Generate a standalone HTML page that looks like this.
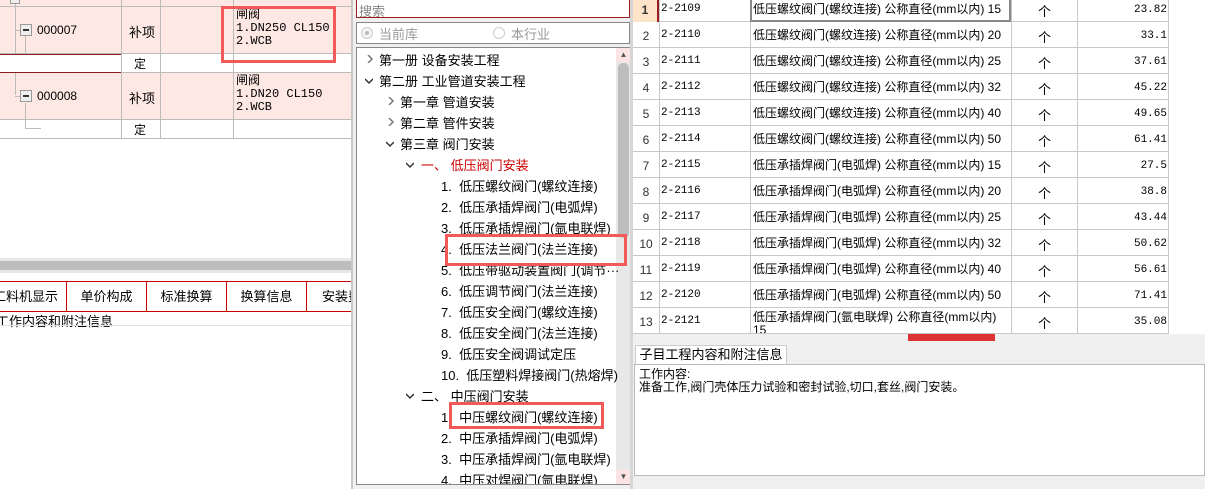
<!DOCTYPE html>
<html><head><meta charset="utf-8"><style>
*{margin:0;padding:0;box-sizing:border-box}
body{width:1205px;height:489px;overflow:hidden;background:#f0f0f0;font-family:"Liberation Sans","Noto Sans CJK SC","WenQuanYi Zen Hei",sans-serif;font-size:12px;color:#000;position:relative}
.a{position:absolute}
.mono{font-family:"Liberation Mono","WenQuanYi Zen Hei",monospace;font-size:12px;line-height:13px}
.hl{border:3px solid #f25a5a;position:absolute}
.cv{position:absolute;width:8px;height:8px}
</style></head><body>
<!-- LEFT PANEL -->
<div class="a" style="left:0;top:0;width:352px;height:489px;background:#fff"></div>
<div class="a" style="left:0;top:-2px;width:351px;height:9px;background:#fde8e4;border-bottom:1px solid #bbb"></div>
<div class="a" style="left:0;top:7px;width:351px;height:47px;background:#fde8e4;border-bottom:1px solid #bbb"></div>
<div class="a" style="left:0;top:54px;width:351px;height:19px;background:#fff;border-bottom:1px solid #bbb"></div>
<div class="a" style="left:0;top:73px;width:351px;height:47px;background:#fde8e4;border-bottom:1px solid #bbb"></div>
<div class="a" style="left:0;top:120px;width:351px;height:19px;background:#fff;border-bottom:1px solid #bbb"></div>
<div class="a" style="left:0;top:54px;width:122px;height:19px;border:1px solid #8b1a1a;border-left:none"></div>
<div class="a" style="left:121px;top:0;width:1px;height:139px;background:#bbb"></div>
<div class="a" style="left:160px;top:0;width:1px;height:139px;background:#bbb"></div>
<div class="a" style="left:233px;top:0;width:1px;height:139px;background:#bbb"></div>
<div class="a" style="left:351px;top:0;width:1px;height:139px;background:#bbb"></div>
<div class="a" style="left:15px;top:0;width:1px;height:54px;background:#bbb"></div>
<div class="a" style="left:15px;top:73px;width:1px;height:22px;background:#bbb"></div>
<div class="a" style="left:15px;top:30px;width:5px;height:1px;background:#bbb"></div>
<div class="a" style="left:15px;top:96px;width:5px;height:1px;background:#bbb"></div>
<div class="a" style="left:25px;top:36px;width:1px;height:18px;background:#bbb"></div>
<div class="a" style="left:25px;top:103px;width:1px;height:25px;background:#bbb"></div>
<div class="a" style="left:25px;top:128px;width:16px;height:1px;background:#bbb"></div>
<div class="a" style="left:10px;top:-4px;width:10px;height:8px;border:1px solid #999;background:#eee"></div>
<div class="a" style="left:20px;top:24px;width:12px;height:12px;border:1px solid #999;background:#eee"><div style="margin:4px 2px;height:2px;background:#333"></div></div>
<div class="a" style="left:20px;top:90px;width:12px;height:12px;border:1px solid #999;background:#eee"><div style="margin:4px 2px;height:2px;background:#333"></div></div>
<div class="a" style="left:37px;top:23px">000007</div>
<div class="a" style="left:37px;top:89px">000008</div>
<div class="a" style="left:129px;top:22px;font-size:13px">补项</div>
<div class="a" style="left:129px;top:88px;font-size:13px">补项</div>
<div class="a" style="left:134px;top:55px;font-size:12px">定</div>
<div class="a" style="left:134px;top:121px;font-size:12px">定</div>
<div class="a mono" style="left:236px;top:9px">闸阀<br>1.DN250 CL150<br>2.WCB</div>
<div class="a mono" style="left:236px;top:75px">闸阀<br>1.DN20 CL150<br>2.WCB</div>
<div class="hl" style="left:221px;top:6px;width:115px;height:57px"></div>
<div class="a" style="left:0;top:258px;width:352px;height:6px;background:#e6e6e6"></div>
<div class="a" style="left:0;top:261px;width:352px;height:9px;background:#bdbdbd"></div>
<div class="a" style="left:0;top:270px;width:352px;height:3px;background:#e6e6e6"></div>
<div class="a" style="left:0;top:281px;width:352px;height:31px;border-top:1px solid #c00;border-bottom:1px solid #c00;font-size:13px">
<div class="a" style="left:0;top:0;width:67px;height:29px;border-right:1px solid #c00;line-height:29px;overflow:hidden;white-space:nowrap"><span style="position:absolute;left:-7px">工料机显示</span></div>
<div class="a" style="left:67px;top:0;width:80px;height:29px;border-right:1px solid #c00;line-height:29px;text-align:center">单价构成</div>
<div class="a" style="left:147px;top:0;width:80px;height:29px;border-right:1px solid #c00;line-height:29px;text-align:center">标准换算</div>
<div class="a" style="left:227px;top:0;width:80px;height:29px;border-right:1px solid #c00;line-height:29px;text-align:center">换算信息</div>
<div class="a" style="left:307px;top:0;width:45px;height:29px;line-height:29px;padding-left:15px;overflow:hidden;white-space:nowrap">安装费</div>
</div>
<div class="a" style="left:-4px;top:311px;font-size:13px">工作内容和附注信息</div>
<div class="a" style="left:0;top:325px;width:352px;height:1px;background:#e0e0e0"></div>
<div class="a" style="left:351px;top:0;width:2px;height:489px;background:#c8c8c8"></div>
<!-- MIDDLE PANEL -->
<div class="a" style="left:353px;top:0;width:280px;height:489px;background:#f0f0f0"></div>
<div class="a" style="left:356px;top:-2px;width:274px;height:20px;background:#fff;border:1px solid #9b1c1c;color:#888;font-size:13px;padding:2px 2px">搜索</div>
<div class="a" style="left:356px;top:22px;width:274px;height:22px;background:#fff;border:1px solid #888;color:#999;font-size:13px">
<div class="a" style="left:4px;top:4px;width:12px;height:12px;border-radius:50%;border:1px solid #ccc;background:#f4f4f4"><div style="margin:3px;width:4px;height:4px;border-radius:50%;background:#bbb"></div></div>
<div class="a" style="left:22px;top:1px">当前库</div>
<div class="a" style="left:136px;top:4px;width:12px;height:12px;border-radius:50%;border:1px solid #ccc"></div>
<div class="a" style="left:154px;top:1px">本行业</div></div>
<div class="a" style="left:356px;top:47px;width:275px;height:438px;background:#fff;border:1px solid #888;overflow:hidden;font-size:13px">
<div class="a" style="left:259px;top:0;width:15px;height:436px;background:#e8e8e8"></div>
<div class="a" style="left:259px;top:0;width:15px;height:14px;background:#fde4e4;color:#555;font-size:8px;text-align:center;line-height:14px">▲</div>
<div class="a" style="left:259px;top:422px;width:15px;height:14px;background:#fde4e4;color:#555;font-size:8px;text-align:center;line-height:14px">▼</div>
<div class="a" style="left:261px;top:15px;width:11px;height:175px;background:#bdbdbd;border-radius:5px"></div>
<svg class="cv" style="left:9px;top:7px" viewBox="0 0 8 8"><path d="M2 0L6 4L2 8" fill="none" stroke="#777" stroke-width="1.5"/></svg><div class="a" style="left:22px;top:2px">第一册 设备安装工程</div>
<svg class="cv" style="left:8px;top:29px" viewBox="0 0 8 8"><path d="M0 2L4 6L8 2" fill="none" stroke="#333" stroke-width="1.5"/></svg><div class="a" style="left:22px;top:23px">第二册 工业管道安装工程</div>
<svg class="cv" style="left:30px;top:49px" viewBox="0 0 8 8"><path d="M2 0L6 4L2 8" fill="none" stroke="#777" stroke-width="1.5"/></svg><div class="a" style="left:43px;top:44px">第一章 管道安装</div>
<svg class="cv" style="left:30px;top:70px" viewBox="0 0 8 8"><path d="M2 0L6 4L2 8" fill="none" stroke="#777" stroke-width="1.5"/></svg><div class="a" style="left:43px;top:65px">第二章 管件安装</div>
<svg class="cv" style="left:29px;top:92px" viewBox="0 0 8 8"><path d="M0 2L4 6L8 2" fill="none" stroke="#333" stroke-width="1.5"/></svg><div class="a" style="left:43px;top:86px">第三章 阀门安装</div>
<svg class="cv" style="left:49px;top:113px" viewBox="0 0 8 8"><path d="M0 2L4 6L8 2" fill="none" stroke="#333" stroke-width="1.5"/></svg><div class="a" style="left:64px;top:107px;color:#c00">一、 低压阀门安装</div>
<div class="a" style="left:84px;top:128px">1.&nbsp; 低压螺纹阀门(螺纹连接)</div>
<div class="a" style="left:84px;top:149px">2.&nbsp; 低压承插焊阀门(电弧焊)</div>
<div class="a" style="left:84px;top:170px">3.&nbsp; 低压承插焊阀门(氩电联焊)</div>
<div class="a" style="left:84px;top:191px">4.&nbsp; 低压法兰阀门(法兰连接)</div>
<div class="a" style="left:84px;top:212px;white-space:nowrap">5.&nbsp; 低压带驱动装置阀门(调节···</div>
<div class="a" style="left:84px;top:233px">6.&nbsp; 低压调节阀门(法兰连接)</div>
<div class="a" style="left:84px;top:254px">7.&nbsp; 低压安全阀门(螺纹连接)</div>
<div class="a" style="left:84px;top:275px">8.&nbsp; 低压安全阀门(法兰连接)</div>
<div class="a" style="left:84px;top:296px">9.&nbsp; 低压安全阀调试定压</div>
<div class="a" style="left:84px;top:317px">10.&nbsp; 低压塑料焊接阀门(热熔焊)</div>
<svg class="cv" style="left:49px;top:344px" viewBox="0 0 8 8"><path d="M0 2L4 6L8 2" fill="none" stroke="#333" stroke-width="1.5"/></svg><div class="a" style="left:64px;top:338px">二、 中压阀门安装</div>
<div class="a" style="left:84px;top:359px">1.&nbsp; 中压螺纹阀门(螺纹连接)</div>
<div class="a" style="left:84px;top:380px">2.&nbsp; 中压承插焊阀门(电弧焊)</div>
<div class="a" style="left:84px;top:401px">3.&nbsp; 中压承插焊阀门(氩电联焊)</div>
<div class="a" style="left:84px;top:422px">4.&nbsp; 中压对焊阀门(氩电联焊)</div>
</div>
<div class="hl" style="left:445px;top:234px;width:182px;height:32px"></div>
<div class="hl" style="left:449px;top:402px;width:155px;height:27px"></div>
<div class="a" style="left:630px;top:0;width:3px;height:489px;background:#d6d6d6"></div>
<!-- RIGHT PANEL -->
<div class="a" style="left:633px;top:0;width:572px;height:334px;background:#fff"></div>
<div id="rt"></div>
<div class="a" style="left:633px;top:334px;width:572px;height:155px;background:#f0f0f0"></div>
<div class="a" style="left:908px;top:334px;width:87px;height:7px;background:#d33"></div>
<div class="a" style="left:635px;top:345px;width:152px;height:19px;background:#fff;border:1px solid #ccc;border-bottom:none;font-size:13px;text-align:center;line-height:18px">子目工程内容和附注信息</div>
<div class="a" style="left:634px;top:364px;width:571px;height:112px;background:#fff;border:1px solid #bbb;font-size:12px;padding:3px 4px;line-height:13px">工作内容:<br>准备工作,阀门壳体压力试验和密封试验,切口,套丝,阀门安装。</div>
<script>
var d=[["2-2109","低压螺纹阀门(螺纹连接) 公称直径(mm以内) 15","23.82"],["2-2110","低压螺纹阀门(螺纹连接) 公称直径(mm以内) 20","33.1"],["2-2111","低压螺纹阀门(螺纹连接) 公称直径(mm以内) 25","37.61"],["2-2112","低压螺纹阀门(螺纹连接) 公称直径(mm以内) 32","45.22"],["2-2113","低压螺纹阀门(螺纹连接) 公称直径(mm以内) 40","49.65"],["2-2114","低压螺纹阀门(螺纹连接) 公称直径(mm以内) 50","61.41"],["2-2115","低压承插焊阀门(电弧焊) 公称直径(mm以内) 15","27.5"],["2-2116","低压承插焊阀门(电弧焊) 公称直径(mm以内) 20","38.8"],["2-2117","低压承插焊阀门(电弧焊) 公称直径(mm以内) 25","43.44"],["2-2118","低压承插焊阀门(电弧焊) 公称直径(mm以内) 32","50.62"],["2-2119","低压承插焊阀门(电弧焊) 公称直径(mm以内) 40","56.61"],["2-2120","低压承插焊阀门(电弧焊) 公称直径(mm以内) 50","71.41"],["2-2121","低压承插焊阀门(氩电联焊) 公称直径(mm以内)<br>15","35.08"]];
var h="";
for(var i=0;i<13;i++){var t=-4+i*26;var c=d[i];
h+='<div class="a" style="left:633px;top:'+t+'px;width:536px;height:26px;border-bottom:1px solid #c8c8c8"></div>';
h+='<div class="a" style="left:633px;top:'+t+'px;width:26px;height:26px;'+(i==0?'background:#fde3c8;border-right:2px solid #9b1c1c;font-weight:bold;':'')+'text-align:center;line-height:28px;font-size:12px;color:#333">'+(i+1)+'</div>';
h+='<div class="a mono" style="left:661px;top:'+(t+7)+'px;font-size:11px">'+c[0]+'</div>';
h+='<div class="a" style="left:753px;top:'+(i==12?t+3:t+7)+'px;font-size:12px;line-height:13px;white-space:nowrap;height:22px;overflow:hidden">'+c[1]+'</div>';
h+='<div class="a" style="left:1038px;top:'+(t+5)+'px;font-size:13px">个</div>';
h+='<div class="a mono" style="left:1078px;top:'+(t+8)+'px;width:89px;text-align:right;font-size:11px">'+c[2]+'</div>';}
h+='<div class="a" style="left:659px;top:0;width:1px;height:334px;background:#c8c8c8"></div>';
h+='<div class="a" style="left:750px;top:0;width:1px;height:334px;background:#c8c8c8"></div>';
h+='<div class="a" style="left:1011px;top:0;width:1px;height:334px;background:#c8c8c8"></div>';
h+='<div class="a" style="left:1077px;top:0;width:1px;height:334px;background:#c8c8c8"></div>';
h+='<div class="a" style="left:1168px;top:0;width:1px;height:334px;background:#c8c8c8"></div>';
h+='<div class="a" style="left:750px;top:-2px;width:261px;height:24px;border:2px solid #888"></div>';
document.getElementById("rt").innerHTML=h;
</script>
</body></html>
